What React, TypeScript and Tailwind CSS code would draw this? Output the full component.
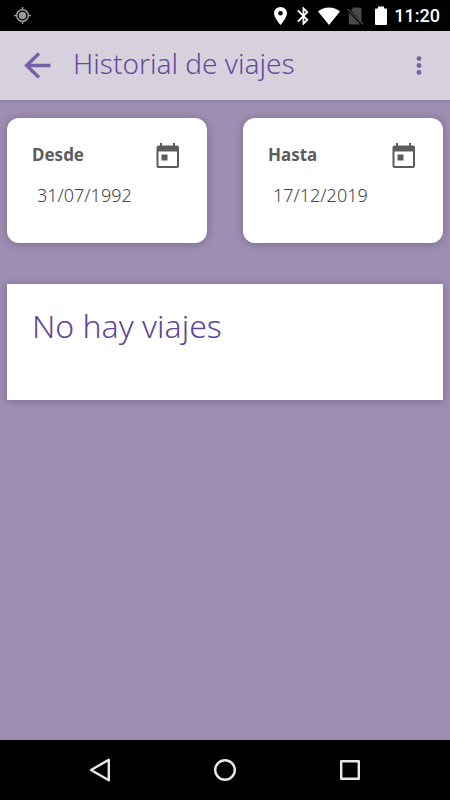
import { useState } from "react";

function StatusBar() {
  return (
    <div className="flex h-[31px] shrink-0 items-center justify-between bg-black pr-[10px] pl-[14px] text-white">
      <svg className="size-[17px] text-[#9b9b9b]" viewBox="0 0 17 17" fill="none" stroke="currentColor" aria-hidden="true">
        <circle cx="8.5" cy="8.5" r="5.8" strokeWidth="1.5" />
        <circle cx="8.5" cy="8.5" r="3.7" fill="currentColor" stroke="none" />
        <path d="M8.5 0v3M8.5 14v3M0 8.5h3M14 8.5h3" strokeWidth="1.6" />
      </svg>
      <div className="flex items-center">
        <svg className="mr-[10px] h-[18px] w-[13px]" viewBox="5 2 14 20" preserveAspectRatio="none" fill="currentColor" aria-hidden="true">
          <path d="M12 2C8.13 2 5 5.13 5 9c0 5.25 7 13 7 13s7-7.75 7-13c0-3.87-3.13-7-7-7zm0 9.5a2.5 2.5 0 1 1 0-5 2.5 2.5 0 0 1 0 5z" />
        </svg>
        <svg className="mr-[9px] h-[18px] w-[12px]" viewBox="5 2 13 20" fill="currentColor" aria-hidden="true">
          <path d="M17.71 7.71 12 2h-1v7.59L6.41 5 5 6.41 10.59 12 5 17.59 6.41 19 11 14.41V22h1l5.71-5.71-4.3-4.29 4.3-4.29zM13 5.83l1.88 1.88L13 9.59V5.83zm1.88 10.46L13 18.17v-3.76l1.88 1.88z" />
        </svg>
        <svg className="mr-[7px] h-[18px] w-[22px]" viewBox="0 0 22 18" fill="currentColor" aria-hidden="true">
          <path d="M0 4.4C3 1.8 7 .5 11 .5s8 1.3 11 3.9L11 18z" />
        </svg>
        <svg className="mr-[11px] h-[18px] w-[17px]" viewBox="0 0 17 18" aria-hidden="true">
          <path d="M6.2.5H13a1.5 1.5 0 0 1 1.5 1.5v13L4 3.2zM1.8 5.2 13.3 17.5H3.3A1.5 1.5 0 0 1 1.8 16z" fill="#4a4a4a" />
          <path d="m.7 2 15.5 15.5" stroke="#4a4a4a" strokeWidth="1.3" />
        </svg>
        <svg className="mr-[7px] h-[19px] w-[12px]" viewBox="0 0 12 19" fill="currentColor" aria-hidden="true">
          <path d="M3 .5h6v2h2a1 1 0 0 1 1 1V18a1 1 0 0 1-1 1H1a1 1 0 0 1-1-1V3.500a1 1 0 0 1 1-1h2z" />
        </svg>
        <span className="font-['Roboto',sans-serif] text-[18px] leading-8 font-medium">11:20</span>
      </div>
    </div>
  );
}

function Header() {
  return (
    <header className="flex h-[69px] shrink-0 items-center bg-[#d7d1de] pr-[18px] pl-6 text-[#7560a5] shadow-[0_1px_3px_rgba(70,50,100,0.25)]">
      <button type="button" aria-label="Volver" className="mr-[21px] shrink-0">
        <svg className="size-7" viewBox="0 0 28 28" fill="none" stroke="currentColor" strokeWidth="3.4" aria-hidden="true">
          <path d="M26.5 13.5H3M15 1.5 2.6 13.5 15 25.5" />
        </svg>
      </button>
      <h1 className="flex-1 pb-1.5 text-[28px] leading-10 font-light whitespace-nowrap text-[#644c9b]">Historial de viajes</h1>
      <button type="button" aria-label="Más opciones" className="flex w-[27px] shrink-0 justify-center">
        <svg className="h-[19px] w-[6px]" viewBox="0 0 6 19" fill="currentColor" aria-hidden="true">
          <circle cx="3" cy="2.6" r="2.4" />
          <circle cx="3" cy="9.5" r="2.4" />
          <circle cx="3" cy="16.4" r="2.4" />
        </svg>
      </button>
    </header>
  );
}

function DateCard({ id, label, initial }: { id: string; label: string; initial: string }) {
  const [value, setValue] = useState(initial);
  return (
    <div className="h-[125px] min-w-0 rounded-xl bg-white pt-[25px] pr-[27px] pl-[25px] text-[#5c5c5c] shadow-[0_1px_8px_rgba(70,45,95,0.4)]">
      <div className="flex items-start justify-between">
        <label htmlFor={id} className="text-[17px] leading-6 font-bold">
          {label}
        </label>
        <button type="button" aria-label={`Elegir fecha: ${label}`}>
          <svg className="h-[26px] w-[24px]" viewBox="0 0 24 26" aria-hidden="true">
            <path
              fill="currentColor"
              fillRule="evenodd"
              d="M4 0h2v2.500h11V0h2v2.500H21A2 2 0 0 1 23 4.500v18.500a2 2 0 0 1-2 2H2.500a2 2 0 0 1-2-2V4.500a2 2 0 0 1 2-2H4zM2.500 8.500v14.500H21V8.500zM5.500 11.500h6v6h-6z"
            />
          </svg>
        </button>
      </div>
      <input
        id={id}
        type="text"
        value={value}
        onChange={(event) => setValue(event.target.value)}
        className="mt-3.5 block h-6 w-full bg-transparent pl-[5px] text-[18px] leading-6 font-light text-[#444444] outline-none"
      />
    </div>
  );
}

function NavigationBar() {
  return (
    <nav className="flex h-[60px] shrink-0 items-center justify-center gap-[101px] bg-black text-[#e8e8e8]">
      <button type="button" aria-label="Atrás">
        <svg className="size-6" viewBox="0 0 24 24" fill="none" stroke="currentColor" strokeWidth="2.4" strokeLinejoin="round" aria-hidden="true">
          <path d="M20.8 1.8v20.4L3 12z" />
        </svg>
      </button>
      <button type="button" aria-label="Inicio">
        <svg className="size-6" viewBox="0 0 24 24" fill="none" stroke="currentColor" strokeWidth="2.4" aria-hidden="true">
          <circle cx="12" cy="12" r="9.8" />
        </svg>
      </button>
      <button type="button" aria-label="Recientes">
        <svg className="size-6" viewBox="0 0 24 24" fill="none" stroke="currentColor" strokeWidth="2.4" strokeLinejoin="round" aria-hidden="true">
          <rect x="3.2" y="3.2" width="17.6" height="17.6" />
        </svg>
      </button>
    </nav>
  );
}

export default function App() {
  return (
    <div className="flex min-h-screen flex-col bg-[#9e8eb2] font-['Noto_Sans','Open_Sans',sans-serif] antialiased">
      <StatusBar />
      <Header />
      <main className="flex-1 px-[7px] pt-[18px]">
        <div className="grid grid-cols-2 gap-9">
          <DateCard id="desde" label="Desde" initial="31/07/1992" />
          <DateCard id="hasta" label="Hasta" initial="17/12/2019" />
        </div>
        <section className="mt-[41px] h-[116px] bg-white px-[25px] pt-5 text-[#5e469a] shadow-[0_1px_8px_rgba(70,45,95,0.4)]">
          <p className="text-[32px] leading-[44px] font-light">No hay viajes</p>
        </section>
      </main>
      <NavigationBar />
    </div>
  );
}
